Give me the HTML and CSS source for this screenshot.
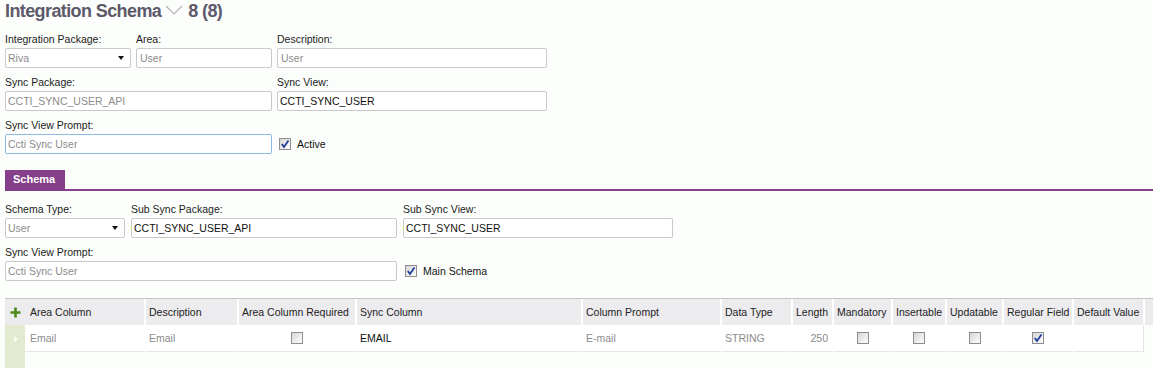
FILE: index.html
```html
<!DOCTYPE html>
<html>
<head>
<meta charset="utf-8">
<link rel="stylesheet" href="styles.css">
</head>
<body>
<div class="page">
  <h1 class="title">
    <span>Integration Schema</span>
    <svg class="chev" width="18" height="10" viewBox="0 0 18 10"><polyline points="1,1 9,9 17,1" fill="none" stroke="#b4b4b4" stroke-width="1.2"/></svg>
    <span>8 (8)</span>
  </h1>

  <div class="form form-main">
    <div class="field">
      <div class="label">Integration Package:</div>
      <div class="input select ro"><span>Riva</span><span class="arrow"></span></div>
    </div>
    <div class="field">
      <div class="label">Area:</div>
      <div class="input ro pad3">User</div>
    </div>
    <div class="field">
      <div class="label">Description:</div>
      <div class="input ro pad3">User</div>
    </div>
    <div class="field span2">
      <div class="label">Sync Package:</div>
      <div class="input ro">CCTI_SYNC_USER_API</div>
    </div>
    <div class="field">
      <div class="label">Sync View:</div>
      <div class="input">CCTI_SYNC_USER</div>
    </div>
    <div class="field span2">
      <div class="label">Sync View Prompt:</div>
      <div class="input ro focus">Ccti Sync User</div>
    </div>
    <div class="check-field">
      <span class="cb checked"><svg width="10" height="10" viewBox="0 0 10 10"><polyline points="1.8,5 4,8 8.5,1.5" fill="none" stroke="#23409a" stroke-width="1.8"/></svg></span>
      <span class="cb-label">Active</span>
    </div>
  </div>

  <div class="tabbar">
    <div class="tab">Schema</div>
  </div>

  <div class="form form-schema">
    <div class="field">
      <div class="label">Schema Type:</div>
      <div class="input select ro"><span>User</span><span class="arrow"></span></div>
    </div>
    <div class="field">
      <div class="label">Sub Sync Package:</div>
      <div class="input">CCTI_SYNC_USER_API</div>
    </div>
    <div class="field">
      <div class="label">Sub Sync View:</div>
      <div class="input">CCTI_SYNC_USER</div>
    </div>
    <div class="field span2">
      <div class="label">Sync View Prompt:</div>
      <div class="input ro">Ccti Sync User</div>
    </div>
    <div class="check-field">
      <span class="cb checked"><svg width="10" height="10" viewBox="0 0 10 10"><polyline points="1.8,5 4,8 8.5,1.5" fill="none" stroke="#23409a" stroke-width="1.8"/></svg></span>
      <span class="cb-label">Main Schema</span>
    </div>
  </div>

  <div class="grid">
    <div class="row head">
      <div class="c lead"><svg width="11" height="11" viewBox="0 0 11 11"><path d="M5.5 0.5v10M0.5 5.5h10" stroke="#4c8a1e" stroke-width="2.6"/></svg></div>
      <div class="c first">Area Column</div>
      <div class="c">Description</div>
      <div class="c">Area Column Required</div>
      <div class="c">Sync Column</div>
      <div class="c">Column Prompt</div>
      <div class="c">Data Type</div>
      <div class="c">Length</div>
      <div class="c">Mandatory</div>
      <div class="c">Insertable</div>
      <div class="c">Updatable</div>
      <div class="c">Regular Field</div>
      <div class="c">Default Value</div>
      <div class="c fill"></div>
    </div>
    <div class="row data">
      <div class="c lead"><span class="tri"></span></div>
      <div class="c first ro-t">Email</div>
      <div class="c ro-t">Email</div>
      <div class="c mid"><span class="cb"></span></div>
      <div class="c">EMAIL</div>
      <div class="c ro-t">E-mail</div>
      <div class="c ro-t">STRING</div>
      <div class="c num ro-t">250</div>
      <div class="c mid"><span class="cb"></span></div>
      <div class="c mid"><span class="cb"></span></div>
      <div class="c mid"><span class="cb"></span></div>
      <div class="c mid"><span class="cb checked"><svg width="10" height="10" viewBox="0 0 10 10"><polyline points="1.8,5 4,8 8.5,1.5" fill="none" stroke="#23409a" stroke-width="1.8"/></svg></span></div>
      <div class="c"></div>
      <div class="c fill"></div>
    </div>
    <div class="row rest">
      <div class="c lead"></div>
    </div>
  </div>
</div>
</body>
</html>
```

FILE: styles.css
```css
html, body {
  margin: 0;
  padding: 0;
  background: #fcfefc;
}
body {
  font-family: "Liberation Sans", Arial, sans-serif;
  font-size: 10.5px;
  color: #222;
  overflow: hidden;
}
.page {
  padding-left: 5px;
}
.title {
  margin: 0;
  height: 22px;
  line-height: 22px;
  display: flex;
  align-items: center;
  font-family: "Liberation Sans", Arial, sans-serif;
  font-weight: bold;
  font-size: 18px;
  letter-spacing: -0.6px;
  color: #5d596b;
  white-space: nowrap;
}
.chev {
  margin: 0 5px 0 4px;
  position: relative;
  top: -1px;
}
.form {
  display: grid;
  row-gap: 7px;
}
.form-main {
  margin-top: 10px;
  grid-template-columns: 126px 136px 270px;
  column-gap: 5px;
}
.form-schema {
  margin-top: 11px;
  grid-template-columns: 120px 266px 270px;
  column-gap: 6px;
}
.field {
  display: flex;
  flex-direction: column;
}
.span2 {
  grid-column: 1 / 3;
}
.label {
  height: 14px;
  line-height: 14px;
  margin-bottom: 2px;
  color: #222;
  white-space: nowrap;
}
.input {
  height: 18px;
  line-height: 18px;
  border: 1px solid #c9c9c9;
  border-radius: 2px;
  background: #fff;
  padding: 0 2px;
  color: #111;
  white-space: nowrap;
  overflow: hidden;
}
.input.pad3 {
  padding-left: 3px;
}
.input.ro {
  color: #8b8b8b;
}
.input.focus {
  border-color: #8dbbe6;
}
.select {
  display: flex;
  justify-content: space-between;
  align-items: center;
  padding-right: 6px;
}
.arrow {
  width: 0;
  height: 0;
  border-left: 3.5px solid transparent;
  border-right: 3.5px solid transparent;
  border-top: 4px solid #111;
}
.check-field {
  align-self: end;
  height: 20px;
  display: flex;
  align-items: center;
  padding-left: 2px;
}
.cb {
  box-sizing: border-box;
  width: 12px;
  height: 12px;
  border: 1px solid #8e8e8e;
  background: linear-gradient(135deg, #d6d6d6 0%, #eeeeee 60%, #fafafa 100%);
  display: inline-flex;
  align-items: center;
  justify-content: center;
}
.cb-label {
  margin-left: 6px;
  color: #111;
}
.tabbar {
  margin-top: 16px;
  border-bottom: 2px solid #853f8b;
  display: flex;
}
.tab {
  height: 19px;
  line-height: 19px;
  padding: 0 10px 0 8px;
  background: #853f8b;
  color: #fff;
  font-weight: bold;
  font-size: 11px;
}
.grid {
  margin-top: 17px;
  width: 1148px;
}
.row {
  display: grid;
  grid-template-columns: 20px 119px 93px 118px 226px 139px 71px 41px 59px 54px 57px 70px 71px 10px;
}
.c {
  box-sizing: border-box;
  border-left: 2px solid #fff;
  padding-left: 3px;
  display: flex;
  align-items: center;
  white-space: nowrap;
  overflow: hidden;
}
.c.lead {
  border-left: 0;
  padding: 0;
  justify-content: center;
}
.c.first {
  border-left: 0;
  padding-left: 5px;
}
.head {
  border-top: 1px solid #c6c6c6;
  background: #ecebee;
  height: 26px;
  color: #222;
}
.data {
  height: 27px;
}
.data .c {
  background: #fff;
  border-bottom: 1px solid #e6e6e6;
  color: #111;
}
.data .c.lead {
  background: #e2ebcf;
  border-bottom: 0;
}
.data .c.fill {
  background: transparent;
  border-bottom: 0;
  border-left: 1px solid #e3e3e3;
}
.data .c.ro-t {
  color: #8b8b8b;
}
.c.mid {
  justify-content: center;
  padding-left: 0;
}
.c.num {
  justify-content: flex-end;
  padding-right: 4px;
}
.tri {
  width: 0;
  height: 0;
  border-top: 3px solid transparent;
  border-bottom: 3px solid transparent;
  border-left: 4px solid #fbfff2;
  margin-left: 1px;
}
.rest {
  height: 20px;
}
.rest .c.lead {
  background: #e2ebcf;
}
```
